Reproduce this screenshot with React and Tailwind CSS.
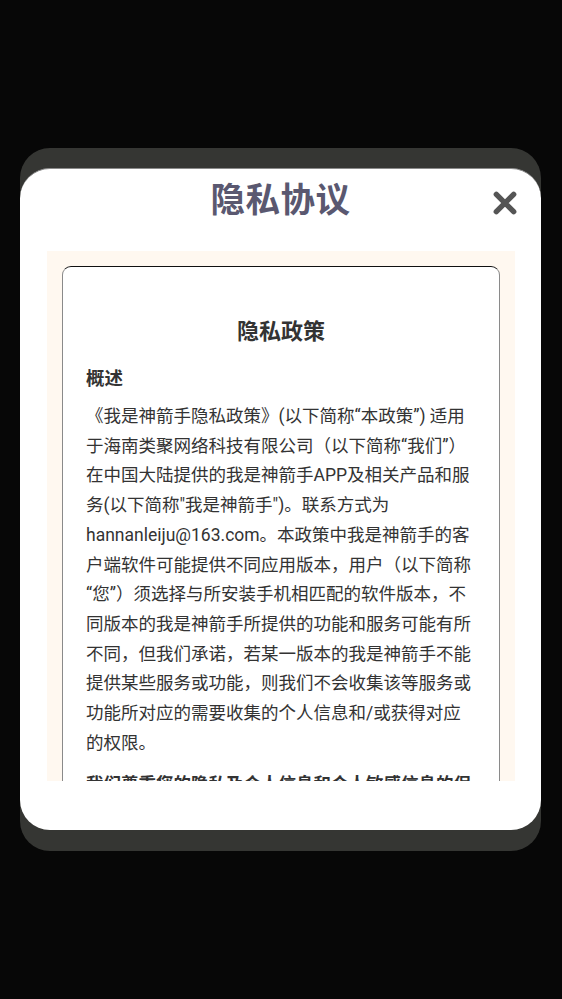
const lines = [
  '《我是神箭手隐私政策》(以下简称“本政策”) 适用',
  '于海南类聚网络科技有限公司（以下简称“我们”）',
  '在中国大陆提供的我是神箭手APP及相关产品和服',
  '务(以下简称"我是神箭手")。联系方式为',
  'hannanleiju@163.com。本政策中我是神箭手的客',
  '户端软件可能提供不同应用版本，用户（以下简称',
  '“您”）须选择与所安装手机相匹配的软件版本，不',
  '同版本的我是神箭手所提供的功能和服务可能有所',
  '不同，但我们承诺，若某一版本的我是神箭手不能',
  '提供某些服务或功能，则我们不会收集该等服务或',
  '功能所对应的需要收集的个人信息和/或获得对应',
  '的权限。',
];

export default function App() {
  const font = { fontFamily: '"Roboto", "Noto Sans CJK SC", sans-serif' };

  return (
    <div className="min-h-screen w-full bg-[#070707] flex items-center pl-[20px] pr-[21px]" style={font}>
      {/* back layer */}
      <div className="w-full rounded-[30px] bg-[#353633] pt-[20px] pb-[21px]">
        {/* dialog */}
        <div className="relative rounded-[30px] bg-white h-[662px] flex flex-col border-t border-[#8a8a8a]">
          <div className="h-[82px] pt-[11px] text-center">
            <h1 className="text-[34.5px] leading-[40px] font-bold text-[#5a5870] tracking-[0.5px]">隐私协议</h1>
          </div>

          <button className="absolute top-[21px] right-[23px] w-[26px] h-[26px] flex items-center justify-center">
            <svg viewBox="0 0 24 24" width="26" height="26">
              <path d="M4 4 L20 20 M20 4 L4 20" stroke="#555555" strokeWidth="5" strokeLinecap="round" fill="none" />
            </svg>
          </button>

          {/* scroll area */}
          <div className="ml-[27px] mr-[26px] h-[530px] overflow-hidden bg-[#fff8f0] px-[15px] pt-[15px]">
            <div className="rounded-[9px] border border-[#8a8a8a] border-t-[#111111] bg-white px-[23px] pt-[48px] pb-8 text-[#333333]">
              <h2 className="text-center text-[22px] leading-[33px] font-bold">隐私政策</h2>
              <h3 className="mt-[17px] text-[18.5px] leading-[28px] font-bold">概述</h3>
              <p className="mt-[9px] text-[17.5px] leading-[29.7px]">
                {lines.map((l, i) => (
                  <span key={i} className="block whitespace-nowrap">{l}</span>
                ))}
              </p>
              <p className="mt-[12px] text-[17.5px] leading-[29.7px] font-bold">
                <span className="block whitespace-nowrap">我们尊重您的隐私及个人信息和个人敏感信息的保</span>
                <span className="block whitespace-nowrap">护，并将依据本政策处理您的个人信息。</span>
              </p>
            </div>
          </div>
        </div>
      </div>
    </div>
  );
}
